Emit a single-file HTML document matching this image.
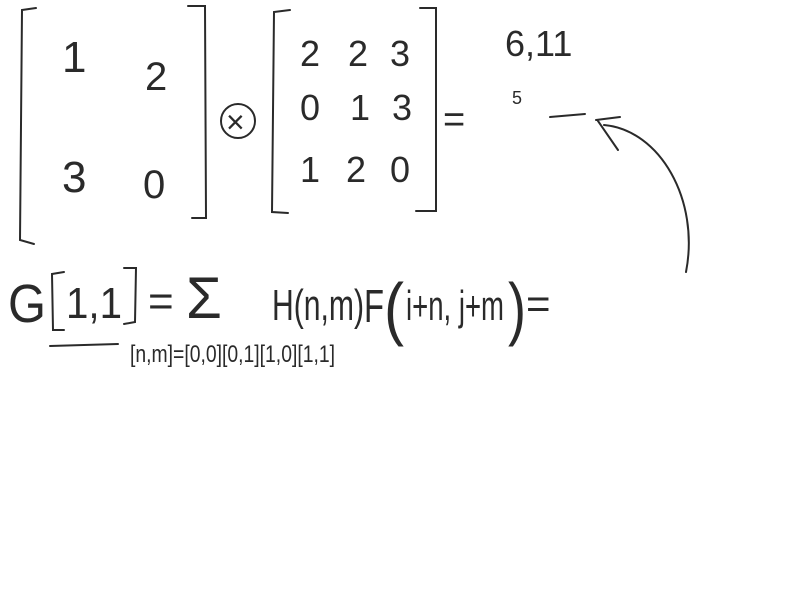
<!DOCTYPE html>
<html><head><meta charset="utf-8"><style>
html,body{margin:0;padding:0;background:#fff;width:800px;height:600px;overflow:hidden}
svg{display:block}
text{font-family:"Liberation Sans",sans-serif;fill:#2a2a2a;font-weight:normal}
path,line,circle{stroke:#2a2a2a;fill:none;stroke-width:2;stroke-linecap:round}
</style></head><body>
<svg width="800" height="600" viewBox="0 0 800 600">
<path d="M36 8 L22 10 L20 240 L34 244"/>
<path d="M188 6 L205 6 L206 218 L192 218"/>
<text x="62" y="72" font-size="44">1</text>
<text x="145" y="90" font-size="40">2</text>
<text x="62" y="192" font-size="44">3</text>
<text x="143" y="198" font-size="40">0</text>
<circle cx="238" cy="121" r="17"/>
<text x="226" y="133" font-size="32">×</text>
<path d="M290 10 L274 12 L272 212 L288 213"/>
<path d="M420 8 L436 8 L436 211 L416 211"/>
<text x="300" y="66" font-size="36">2</text>
<text x="348" y="66" font-size="36">2</text>
<text x="390" y="66" font-size="36">3</text>
<text x="300" y="120" font-size="36">0</text>
<text x="350" y="120" font-size="36">1</text>
<text x="392" y="120" font-size="36">3</text>
<text x="300" y="182" font-size="36">1</text>
<text x="346" y="182" font-size="36">2</text>
<text x="390" y="182" font-size="36">0</text>
<text x="443" y="132" font-size="38">=</text>
<text x="505" y="56" font-size="36">6,11</text>
<text x="512" y="104" font-size="18">5</text>
<line x1="550" y1="117" x2="585" y2="114"/>
<path d="M596 120 L620 117 M598 121 L618 150 M604 125 C660 130 700 200 686 272"/>
<text x="8" y="322" font-size="54" textLength="38" lengthAdjust="spacingAndGlyphs">G</text>
<path d="M64 272 L52 274 L53 330 L64 330"/>
<text x="66" y="318" font-size="44" textLength="56" lengthAdjust="spacingAndGlyphs">1,1</text>
<path d="M124 268 L136 268 L135 322 L124 324"/>
<text x="148" y="316" font-size="44">=</text>
<text x="186" y="318" font-size="58">Σ</text>
<text x="272" y="320" font-size="44" textLength="92" lengthAdjust="spacingAndGlyphs">H(n,m)</text>
<text x="364" y="322" font-size="46" textLength="20" lengthAdjust="spacingAndGlyphs">F</text>
<text x="384" y="332" font-size="70" textLength="20" lengthAdjust="spacingAndGlyphs">(</text>
<text x="406" y="320" font-size="42" textLength="98" lengthAdjust="spacingAndGlyphs">i+n, j+m</text>
<text x="508" y="332" font-size="70" textLength="18" lengthAdjust="spacingAndGlyphs">)</text>
<text x="526" y="318" font-size="42">=</text>
<line x1="50" y1="346" x2="118" y2="344"/>
<text x="130" y="362" font-size="24" textLength="205" lengthAdjust="spacingAndGlyphs">[n,m]=[0,0][0,1][1,0][1,1]</text>
</svg>
</body></html>
